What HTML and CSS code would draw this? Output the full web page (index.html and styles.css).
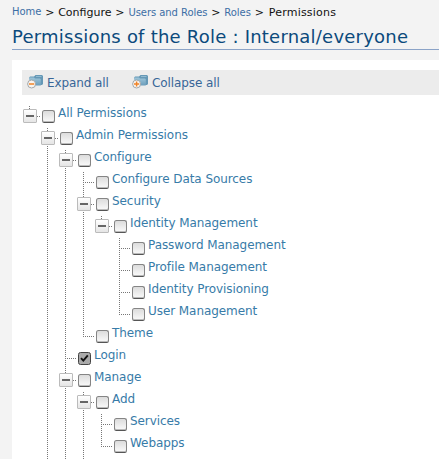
FILE: index.html
```
<!DOCTYPE html>
<html lang="en">
<head>
<meta charset="utf-8">
<title>Permissions</title>
<link rel="stylesheet" href="styles.css">
</head>
<body>
<svg width="0" height="0" class="defs">
  <defs>
    <linearGradient id="fold" x1="0" y1="0" x2="0" y2="1"><stop offset="0" stop-color="#9fc6da"/><stop offset="1" stop-color="#6b9dbb"/></linearGradient>
    <g id="folder">
      <path d="M2 4L3 2.5H7L8.5 1H15L16 2V10L15 11H5Z" fill="#6598b6"/>
      <path d="M2 4.5L3 3.5H7L8 4.5H13L13.8 5.3V11.5H5Z" fill="url(#fold)"/>
      <path d="M9 2.5H14.5" stroke="#91bad0"/>
      <circle cx="4.6" cy="10" r="4" fill="#f8f5f1" stroke="#a3a8ab"/>
    </g>
  </defs>
</svg>
<nav class="crumbs"><a class="home">Home</a><i>&gt;</i><span class="c1">Configure</span><i>&gt;</i><a class="c2">Users and Roles</a><i>&gt;</i><a class="c3">Roles</a><i>&gt;</i><span class="c4">Permissions</span></nav>
<h1><span>Permissions of the Role : Internal/everyone</span></h1>
<main>
  <div class="bar">
    <a class="expand"><svg width="17" height="15"><use href="#folder"/><path d="M2 10H7.2" stroke="#f08327" stroke-width="1.5"/></svg><span>Expand all</span></a>
    <a class="collapse"><svg width="17" height="15"><use href="#folder"/><path d="M2 10H7.2M4.6 7.4V12.6" stroke="#f08327" stroke-width="1.5"/></svg><span>Collapse all</span></a>
  </div>
  <ul class="tree">
    <li class="root"><div class="row"><b></b><s></s><a>All Permissions</a></div>
      <ul>
        <li class="more"><div class="row"><b></b><s></s><a>Admin Permissions</a></div>
          <ul>
            <li><div class="row"><b></b><s></s><a>Configure</a></div>
              <ul>
                <li><div class="row"><s></s><a>Configure Data Sources</a></div></li>
                <li><div class="row"><b></b><s></s><a>Security</a></div>
                  <ul>
                    <li><div class="row"><b></b><s></s><a>Identity Management</a></div>
                      <ul>
                        <li><div class="row"><s></s><a>Password Management</a></div></li>
                        <li><div class="row"><s></s><a>Profile Management</a></div></li>
                        <li><div class="row"><s></s><a>Identity Provisioning</a></div></li>
                        <li><div class="row"><s></s><a>User Management</a></div></li>
                      </ul>
                    </li>
                  </ul>
                </li>
                <li><div class="row"><s></s><a>Theme</a></div></li>
              </ul>
            </li>
            <li><div class="row"><s class="on"><svg width="13" height="13"><path d="M3 6.2L5.3 8.6L9.8 3.4" fill="none" stroke="#111" stroke-width="1.9"/></svg></s><a>Login</a></div></li>
            <li class="more"><div class="row"><b></b><s></s><a>Manage</a></div>
              <ul>
                <li class="more"><div class="row"><b></b><s></s><a>Add</a></div>
                  <ul class="tail">
                    <li><div class="row"><s></s><a>Services</a></div></li>
                    <li><div class="row"><s></s><a>Webapps</a></div></li>
                  </ul>
                </li>
              </ul>
            </li>
          </ul>
        </li>
      </ul>
    </li>
  </ul>
</main>
</body>
</html>
```
FILE: styles.css
```
* { box-sizing: border-box; }
body { margin: 0; height: 459px; overflow: hidden; background: #f3f3f3; font-family: "DejaVu Sans", sans-serif; display: flex; flex-direction: column; }
.defs { position: absolute; }
.crumbs { display: flex; height: 24px; padding-left: 12px; font-size: 11px; line-height: 25px; color: #111; white-space: nowrap; }
.crumbs i { font-style: normal; width: 16.9px; text-align: center; }
.crumbs a { font-size: 10px; letter-spacing: -.06px; color: #3c6ea5; }
.crumbs .home { line-height: 23px; }
.crumbs .c4 { letter-spacing: .22px; padding-left: 1px; }
h1 { margin: 0 0 10px 12px; height: 26px; border-bottom: 1px solid #8ba3c7; font-size: 18px; font-weight: 400; line-height: 25px; letter-spacing: .225px; color: #0b4a7c; white-space: nowrap; }
main { margin-left: 12px; flex: 1; min-height: 0; background: #fff; padding: 10px 0 0 10px; }
.bar { display: flex; height: 25px; background: #ececec; font-size: 12px; line-height: 26px; letter-spacing: -.1px; color: #386698; padding-left: 5px; }
.bar a { display: flex; white-space: nowrap; }
.bar .expand { width: 105px; }
.bar svg { margin: 4px 3px 0 0; }
ul { list-style: none; margin: 0; padding: 0; }
.tree { margin-top: 7px; }
.tree ul { padding-left: 18px; }
.tree .tail { padding-bottom: 12px; }
li { position: relative; }
li::before { content: ""; position: absolute; left: 7px; top: 0; bottom: 0; width: 1px; background: repeating-linear-gradient(#777 0 1px, transparent 1px 2px); }
li:first-child::before { top: 4px; }
li:last-child::before { bottom: auto; height: 15px; }
li:first-child:last-child::before { height: 11px; }
li.more::before, li.more:first-child:last-child::before { bottom: 0; height: auto; }
.row { position: relative; display: flex; height: 22px; padding-left: 20px; font-size: 12px; line-height: 22px; letter-spacing: -.07px; color: #377ba8; white-space: nowrap; }
.row::before { content: ""; position: absolute; left: 7px; top: 14px; width: 12px; height: 1px; background: repeating-linear-gradient(90deg, #777 0 1px, transparent 1px 2px); }
.row b { position: absolute; left: 1px; top: 7px; width: 14px; height: 14px; border: 1px solid #bbb; border-radius: 1px; background: linear-gradient(#666, #666) center / 8px 2px no-repeat, linear-gradient(#fff, #e5e5e5); }
.row s { width: 13px; height: 13px; margin: 8px 3px 0 0; border: 1px solid #858585; border-bottom-color: #555; border-radius: 2.5px; background: linear-gradient(#dcdcdc, #fafafa); box-shadow: inset 0 -1px #bbb; }
.row .on { background: #aaa; border-color: #444; box-shadow: none; }
.row .on svg { display: block; margin: -1px; }
```
